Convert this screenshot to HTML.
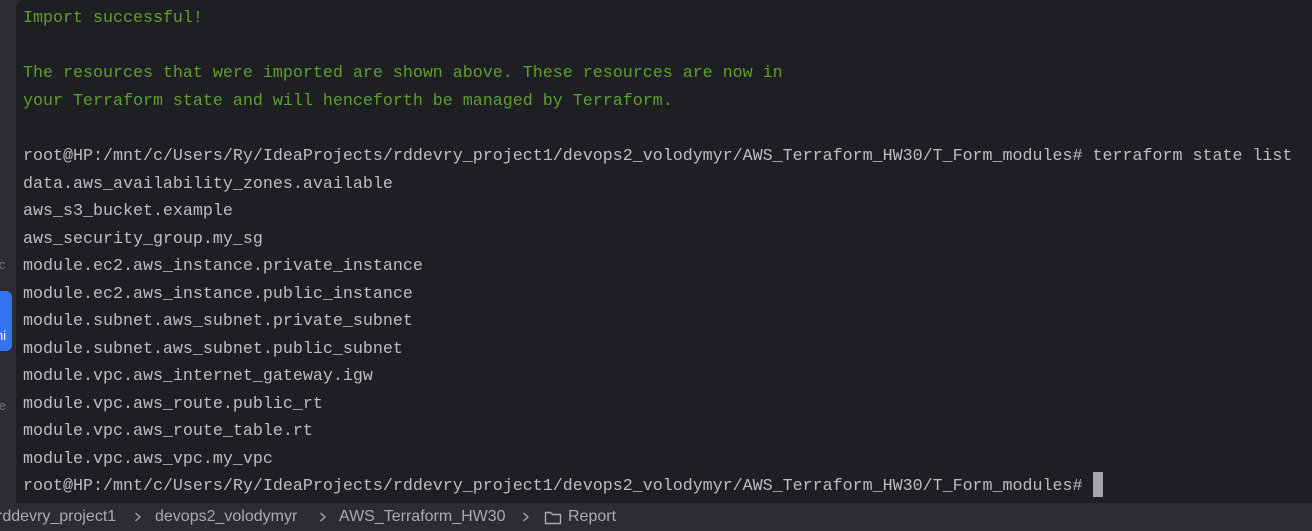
<!DOCTYPE html><html><head><style>
body{margin:0;width:1312px;height:531px;background:#2b2d30;overflow:hidden;position:relative;font-family:"Liberation Mono",monospace}
#t{position:absolute;left:16px;top:0;width:1296px;height:503px;background:#1e1f22;border-top-left-radius:8px}
.l{position:absolute;left:23px;font-size:16.67px;color:#bcbec4;white-space:pre;line-height:20px}
.g{color:#5f9e2f}
#cur{position:absolute;left:1093px;top:472px;width:10px;height:25px;background:#a5a7ab}
#bar{position:absolute;left:0;top:503px;width:1312px;height:28px;font-family:"Liberation Sans",sans-serif;font-size:16px;color:#a9abb0;line-height:28px;white-space:pre}
.side{position:absolute;font-family:"Liberation Sans",sans-serif;font-size:13px;color:#6f737a}
.ch{position:absolute;top:9px}
</style></head><body>
<div id="t"></div>
<div class="side" style="left:-4px;top:257px">ic</div>
<div style="position:absolute;left:0;top:291px;width:12px;height:60px;background:#3574f0;border-radius:0 6px 6px 0"></div>
<div class="side" style="left:-4px;top:328px;color:#fff">ni</div>
<div class="side" style="left:-4px;top:398px">le</div>
<div class="l g" style="top:9px">Import successful!</div>
<div class="l g" style="top:64px">The resources that were imported are shown above. These resources are now in</div>
<div class="l g" style="top:92px">your Terraform state and will henceforth be managed by Terraform.</div>
<div class="l" style="top:147px">root@HP:/mnt/c/Users/Ry/IdeaProjects/rddevry_project1/devops2_volodymyr/AWS_Terraform_HW30/T_Form_modules# terraform state list</div>
<div class="l" style="top:175px">data.aws_availability_zones.available</div>
<div class="l" style="top:202px">aws_s3_bucket.example</div>
<div class="l" style="top:230px">aws_security_group.my_sg</div>
<div class="l" style="top:257px">module.ec2.aws_instance.private_instance</div>
<div class="l" style="top:285px">module.ec2.aws_instance.public_instance</div>
<div class="l" style="top:312px">module.subnet.aws_subnet.private_subnet</div>
<div class="l" style="top:340px">module.subnet.aws_subnet.public_subnet</div>
<div class="l" style="top:367px">module.vpc.aws_internet_gateway.igw</div>
<div class="l" style="top:395px">module.vpc.aws_route.public_rt</div>
<div class="l" style="top:422px">module.vpc.aws_route_table.rt</div>
<div class="l" style="top:450px">module.vpc.aws_vpc.my_vpc</div>
<div class="l" style="top:477px">root@HP:/mnt/c/Users/Ry/IdeaProjects/rddevry_project1/devops2_volodymyr/AWS_Terraform_HW30/T_Form_modules#</div>
<div id="cur"></div>
<div id="bar"><span style="position:absolute;left:-3px">rddevry_project1</span><svg class="ch" style="left:134px" width="8" height="10"><path d="M1.5 1l4.5 4-4.5 4" fill="none" stroke="#a9abb0" stroke-width="1.3"/></svg><span style="position:absolute;left:155px">devops2_volodymyr</span><svg class="ch" style="left:319px" width="8" height="10"><path d="M1.5 1l4.5 4-4.5 4" fill="none" stroke="#a9abb0" stroke-width="1.3"/></svg><span style="position:absolute;left:339px">AWS_Terraform_HW30</span><svg class="ch" style="left:522px" width="8" height="10"><path d="M1.5 1l4.5 4-4.5 4" fill="none" stroke="#a9abb0" stroke-width="1.3"/></svg><svg style="position:absolute;left:544px;top:7px" width="18" height="15" viewBox="0 0 18 15"><path d="M1.5 2.5h5l2 2h8v9h-15z" fill="none" stroke="#a9abb0" stroke-width="1.4"/></svg><span style="position:absolute;left:568px">Report</span></div>
</body></html>
